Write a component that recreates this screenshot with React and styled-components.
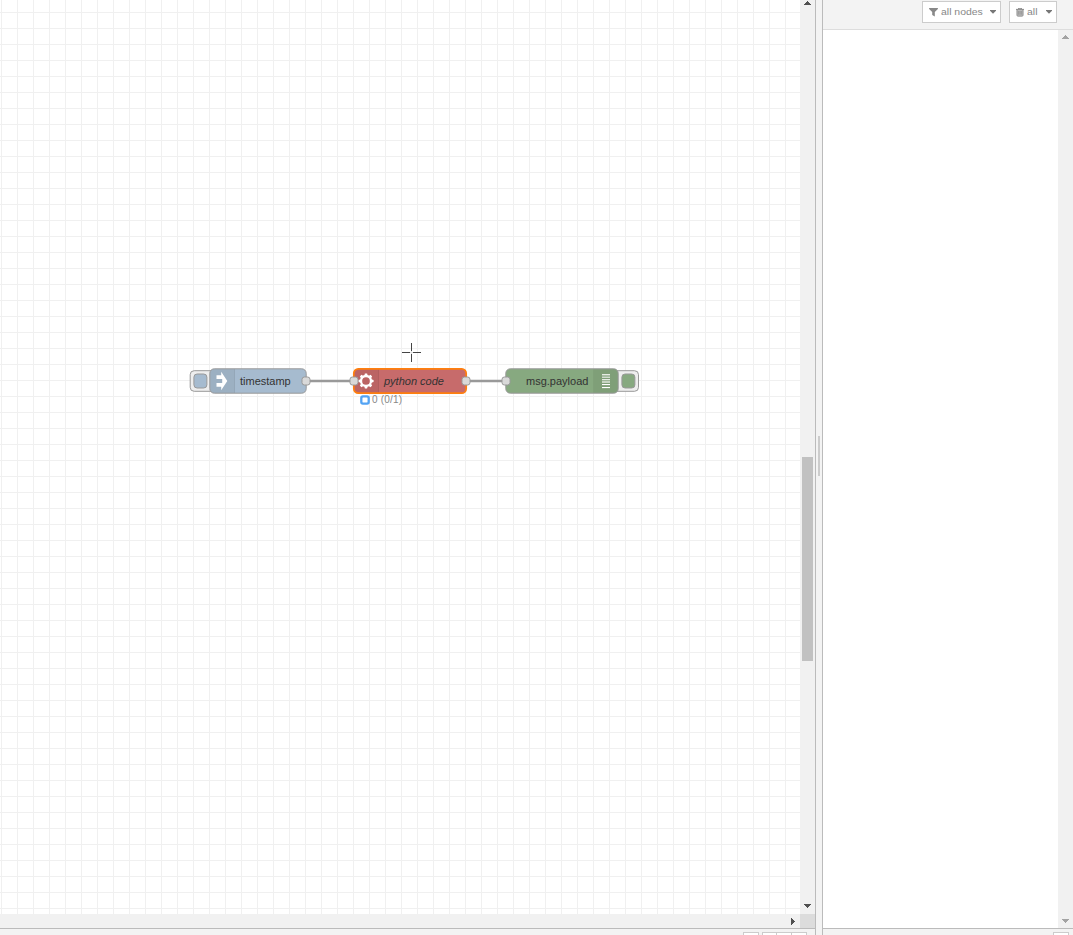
import React from "react";
import styled, { createGlobalStyle } from "styled-components";

const GlobalStyle = createGlobalStyle`
  *, *::before, *::after { box-sizing: border-box; }
  body {
    margin: 0;
    overflow: hidden;
    background: #f3f3f3;
    font-family: "Liberation Sans", Arial, sans-serif;
  }
`;

const Editor = styled.div`
  display: grid;
  grid-template-columns: 816px 6px 251px;
  width: 1073px;
  height: 935px;
  overflow: hidden;
`;

const Workspace = styled.main`
  display: grid;
  grid-template-columns: 800px 15px;
  grid-template-rows: 914px 14px 7px;
  border-right: 1px solid #bbb;
`;

const Canvas = styled.section`
  position: relative;
  overflow: hidden;
  cursor: crosshair;
  background-color: #fff;
  background-image: linear-gradient(to right, #f0f0f0 1px, transparent 1px),
    linear-gradient(to bottom, #f0f0f0 1px, transparent 1px);
  background-size: 16px 16px;
  background-position: 1px 12px;
`;

const VerticalBar = styled.div`
  display: flex;
  flex-direction: column;
  align-items: center;
  justify-content: space-between;
  padding: ${(p) => p.$pad};
  background: #f1f1f1;
`;

const HorizontalBar = styled.div`
  display: flex;
  align-items: center;
  justify-content: flex-end;
  padding-right: 5px;
  background: #f1f1f1;
`;

const Thumb = styled.div`
  width: 11px;
  height: 204px;
  margin-top: 208px;
  background: #c1c1c1;
`;

const Corner = styled.div`
  background: #dcdcdc;
`;

const Footer = styled.footer`
  grid-column: 1 / -1;
  display: flex;
  justify-content: flex-end;
  align-items: flex-start;
  gap: 3px;
  height: 7px;
  padding: 3px ${(p) => p.$right}px 0 0;
  border-top: 1px solid #bbb;
  background: #f3f3f3;
  overflow: hidden;
`;

const FooterGroup = styled.div`
  display: flex;
`;

const FooterButton = styled.button`
  width: ${(p) => p.$width || 16}px;
  height: 16px;
  padding: 0;
  border: 1px solid #ccc;
  background: #fff;
  & + & {
    margin-left: -1px;
  }
`;

const Separator = styled.div`
  display: flex;
  align-items: flex-start;
  justify-content: center;
  padding-top: 436px;
  background: #f3f3f3;
`;

const Grip = styled.div`
  width: 2px;
  height: 40px;
  background: #ccc;
`;

const Sidebar = styled.aside`
  display: grid;
  grid-template-columns: 235px 15px;
  grid-template-rows: 30px 898px 7px;
  border-left: 1px solid #bbb;
`;

const Toolbar = styled.header`
  grid-column: 1 / -1;
  display: flex;
  justify-content: flex-end;
  align-items: flex-start;
  gap: 8px;
  padding: 1px 16px 0 0;
  border-bottom: 1px solid #ddd;
  background: #f3f3f3;
`;

const FilterButton = styled.button`
  display: flex;
  align-items: center;
  width: ${(p) => p.$width}px;
  height: 22px;
  padding: 0 4px 0 6px;
  border: 1px solid #ccc;
  background: #fff;
  color: #888;
  font: 9.5px/20px "Liberation Sans", Arial, sans-serif;
  white-space: nowrap;
`;

const ButtonLabel = styled.span`
  width: 38px;
  margin-left: 3px;
  text-align: left;
  transform: scaleX(1.1);
  transform-origin: left center;
`;

const Caret = styled.svg`
  display: block;
  flex: none;
  margin-left: auto;
  margin-top: -1px;
`;

const Glyph = styled.svg`
  display: block;
  flex: none;
`;

const Messages = styled.div`
  background: #fff;
`;

const Wires = styled.svg`
  position: absolute;
  left: 0;
  top: 0;
`;

const NodeBody = styled.div`
  position: absolute;
  top: 368px;
  left: ${(p) => p.$left}px;
  display: flex;
  flex-direction: ${(p) => (p.$iconRight ? "row-reverse" : "row")};
  width: ${(p) => p.$width}px;
  height: 26px;
  padding: 0 1px;
`;

const Outline = styled.svg`
  position: absolute;
  left: 0;
  top: 0;
  overflow: visible;
`;

const NodeIcon = styled.div`
  position: relative;
  display: flex;
  align-items: center;
  justify-content: center;
  width: 25px;
  height: 26px;
  padding-right: ${(p) => (p.$right ? 0 : 2)}px;
  flex: none;
`;

const NodeLabel = styled.span`
  position: relative;
  flex: 1;
  padding-left: ${(p) => p.$indent}px;
  color: #333;
  font-size: 11px;
  font-style: ${(p) => (p.$italic ? "italic" : "normal")};
  line-height: 26px;
  white-space: nowrap;
`;

const Port = styled.svg`
  position: absolute;
  top: 376px;
  left: ${(p) => p.$left}px;
`;

const NodeButton = styled.svg`
  position: absolute;
  top: 370px;
  left: ${(p) => p.$left}px;
  overflow: visible;
`;

const NodeStatus = styled.div`
  position: absolute;
  left: 360px;
  top: 394px;
  display: flex;
  align-items: center;
  gap: 2px;
  height: 12px;
  color: #888;
  font-size: 10px;
  line-height: 12px;
  letter-spacing: 0.2px;
  white-space: nowrap;
`;

const Pointer = styled.svg`
  position: absolute;
  left: 401px;
  top: 342px;
`;

const ARROWS = {
  up: ["3,0 4,0 4,1 5,1 5,2 6,2 6,3 7,3 7,4 0,4 0,3 1,3 1,2 2,2 2,1 3,1", 7, 4],
  down: ["0,0 7,0 7,1 6,1 6,2 5,2 5,3 4,3 4,4 3,4 3,3 2,3 2,2 1,2 1,1 0,1", 7, 4],
  right: ["0,0 1,0 1,1 2,1 2,2 3,2 3,3 4,3 4,4 3,4 3,5 2,5 2,6 1,6 1,7 0,7", 4, 7],
};

function ScrollArrow({ dir, color = "#505050" }) {
  const [points, w, h] = ARROWS[dir];
  return (
    <svg width={w} height={h} viewBox={`0 0 ${w} ${h}`} shapeRendering="crispEdges">
      <polygon points={points} fill={color} />
    </svg>
  );
}

function DropCaret() {
  return (
    <Caret width="6" height="4" viewBox="0 0 6 4">
      <path d="M0 0h6v.8L3 3.8L0 .8z" fill="#777" />
    </Caret>
  );
}

function FilterIcon() {
  return (
    <Glyph width="9" height="9" viewBox="0 0 9 9">
      <path d="M.1 0h8.8v.9L5.8 4.1V8.6L3.2 6.9V4.1L.1.9z" fill="#888" />
    </Glyph>
  );
}

function TrashIcon() {
  return (
    <Glyph width="8" height="9" viewBox="0 0 8 9">
      <path d="M2.5 1V.2h3V1M0 1.4h8M1 1.6v5.7q0 .8.8.8h4.4q.8 0 .8-.8V1.6" fill="#c4c4c4" stroke="#888" />
      <path d="M2.7 2.8v4M4 2.8v4M5.3 2.8v4" stroke="#888" strokeWidth=".8" />
    </Glyph>
  );
}

function InjectIcon() {
  return (
    <svg width="12" height="20" viewBox="0 0 12 20">
      <path d="M.5 4.2H5.2V.8L11.3 10L5.2 19.2V15.8H.5V12H6.2V8H.5Z" fill="#fff" />
    </svg>
  );
}

function GearIcon() {
  return (
    <svg width="16" height="16" viewBox="-8 -8 16 16">
      <circle r="5" fill="none" stroke="#fff" strokeWidth="2.3" />
      {[0, 45, 90, 135, 180, 225, 270, 315].map((a) => (
        <path key={a} d="M-1.7-5.2L-1.1-7.6H1.1L1.7-5.2z" fill="#fff" transform={`rotate(${a})`} />
      ))}
    </svg>
  );
}

const DEBUG_LINES = [
  [1, 1.4, 0.8],
  [3.5, 1.5, 0.65],
  [6, 1.3, 0.8],
  [8.3, 1.4, 0.8],
  [11, 1.1, 1],
  [14, 1.1, 1],
];

function DebugIcon() {
  return (
    <svg width="8" height="16" viewBox="0 0 8 16">
      {DEBUG_LINES.map(([y, h, o]) => (
        <rect key={y} y={y} width="8" height={h} fill="#fff" opacity={o} />
      ))}
    </svg>
  );
}

function FlowNode({ left, width, color, label, indent, icon, selected, iconRight }) {
  const shade = iconRight
    ? `M${width - 25} 1H${width - 5}q4 0 4 4V21q0 4-4 4H${width - 25}z`
    : "M5 1H26V25H5q-4 0-4-4V5q0-4 4-4z";
  const edge = iconRight ? width - 25 : 26;
  return (
    <NodeBody $left={left} $width={width} $iconRight={iconRight}>
      <Outline width={width} height="26">
        <rect x=".8" y=".8" width={width - 1.6} height="24.4" rx="4.5" fill={color} />
        <path d={shade} fill="#000" fillOpacity=".06" />
        <path d={`M${edge - 0.5} 1V25`} stroke="#000" strokeOpacity=".05" />
        <rect
          x=".8"
          y=".8"
          width={width - 1.6}
          height="24.4"
          rx="4.5"
          fill="none"
          stroke={selected ? "#ff7f0e" : "#999"}
          strokeWidth={selected ? 1.7 : 1}
        />
      </Outline>
      <NodeIcon $right={iconRight}>{icon}</NodeIcon>
      <NodeLabel $indent={indent} $italic={selected}>{label}</NodeLabel>
    </NodeBody>
  );
}

function NodePort({ left }) {
  return (
    <Port $left={left} width="10" height="10">
      <rect x="1" y="1" width="8" height="8" rx="2.4" fill="#d9d9d9" stroke="#999" />
    </Port>
  );
}

function ActionButton({ left, color, faceX }) {
  return (
    <NodeButton $left={left} width="26" height="22">
      <rect x=".2" y=".7" width="25.3" height="20.6" rx="4" fill="#eee" stroke="#999" />
      <rect x={faceX} y="4" width="13" height="14" rx="3.2" fill={color} stroke="#999" />
    </NodeButton>
  );
}

export default function App() {
  return (
    <>
      <GlobalStyle />
      <Editor>
        <Workspace>
          <Canvas>
            <Wires width="800" height="914">
              <path d="M306 381H354M466 381H506" stroke="#999" strokeWidth="2.3" fill="none" />
            </Wires>

            <ActionButton left={190} color="#a6bbcf" faceX={3.9} />
            <FlowNode left={209} width={98} color="#a6bbcf" label="timestamp" indent={5} icon={<InjectIcon />} />
            <NodePort left={301} />

            <FlowNode left={353} width={114} color="#c76b6b" label="python code" indent={5} icon={<GearIcon />} selected />
            <NodePort left={349} />
            <NodePort left={461} />
            <NodeStatus>
              <svg width="10" height="10">
                <rect x="1.3" y="1.3" width="7.4" height="7.4" rx="1.6" fill="#fff" stroke="#53a3f3" strokeWidth="2.3" />
              </svg>
              <span>0 (0/1)</span>
            </NodeStatus>

            <ActionButton left={613} color="#87a980" faceX={8.9} />
            <FlowNode left={505} width={114} color="#87a980" label="msg.payload" indent={20} icon={<DebugIcon />} iconRight />
            <NodePort left={501} />

            <Pointer width="20" height="20" viewBox="0 0 20 20" shapeRendering="crispEdges">
              <path d="M10.5 1v19M1 10.5h19" stroke="#444" />
              <path d="M9 10.5h3M10.5 9v3" stroke="#ddd" />
            </Pointer>
          </Canvas>
          <VerticalBar $pad="1px 0 6px">
            <ScrollArrow dir="up" />
            <Thumb />
            <ScrollArrow dir="down" />
          </VerticalBar>
          <HorizontalBar>
            <ScrollArrow dir="right" />
          </HorizontalBar>
          <Corner />
          <Footer $right={8}>
            <FooterButton />
            <FooterGroup>
              <FooterButton $width={15} />
              <FooterButton />
              <FooterButton />
            </FooterGroup>
          </Footer>
        </Workspace>

        <Separator>
          <Grip />
        </Separator>

        <Sidebar>
          <Toolbar>
            <FilterButton $width={79}>
              <FilterIcon />
              <ButtonLabel>all nodes</ButtonLabel>
              <DropCaret />
            </FilterButton>
            <FilterButton $width={48}>
              <TrashIcon />
              <ButtonLabel>all</ButtonLabel>
              <DropCaret />
            </FilterButton>
          </Toolbar>
          <Messages />
          <VerticalBar $pad="5px 0 5px">
            <ScrollArrow dir="up" color="#a3a3a3" />
            <ScrollArrow dir="down" color="#a3a3a3" />
          </VerticalBar>
          <Footer $right={4}>
            <FooterButton />
          </Footer>
        </Sidebar>
      </Editor>
    </>
  );
}
